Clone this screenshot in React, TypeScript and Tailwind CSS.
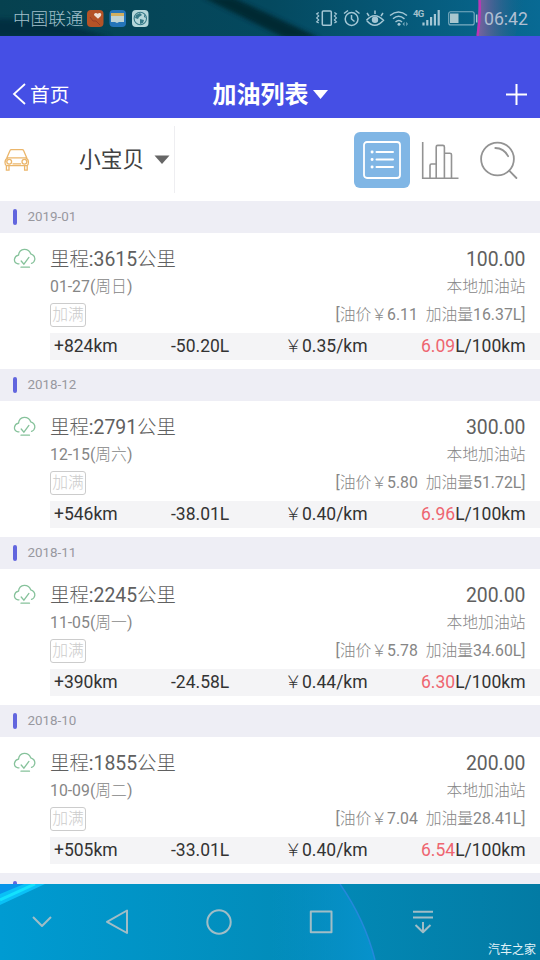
import React from 'react';

type Entry = {
  month: string; odo: string; date: string; day: string; total: string;
  price: string; volume: string; distance: string; used: string; cost: string; rate: string;
};

const entries: Entry[] = [
  { month: '2019-01', odo: '3615', date: '01-27', day: '周日', total: '100.00', price: '6.11', volume: '16.37', distance: '824', used: '50.20', cost: '0.35', rate: '6.09' },
  { month: '2018-12', odo: '2791', date: '12-15', day: '周六', total: '300.00', price: '5.80', volume: '51.72', distance: '546', used: '38.01', cost: '0.40', rate: '6.96' },
  { month: '2018-11', odo: '2245', date: '11-05', day: '周一', total: '200.00', price: '5.78', volume: '34.60', distance: '390', used: '24.58', cost: '0.44', rate: '6.30' },
  { month: '2018-10', odo: '1855', date: '10-09', day: '周二', total: '200.00', price: '7.04', volume: '28.41', distance: '505', used: '33.01', cost: '0.40', rate: '6.54' },
];

function StatusBar() {
  return (
    <div className="relative h-9 shrink-0 overflow-hidden bg-linear-to-r from-[#06414f] via-[#04495f] to-[#086a94]">
      <svg className="absolute inset-0" width="540" height="36" viewBox="0 0 540 36">
        <defs>
          <linearGradient id="glow" x1="0" x2="1"><stop offset="0" stopColor="#8062a0" /><stop offset="1" stopColor="#146386" stopOpacity="0" /></linearGradient>
          <filter id="soft" x="-20%" y="-50%" width="140%" height="200%"><feGaussianBlur stdDeviation="2" /></filter>
        </defs>
        <path d="M-5 19L45 20L112 37H-5Z" fill="#062c3d" opacity=".8" filter="url(#soft)" />
        <path d="M202 -3H232L320 38H285Z" fill="#06252f" opacity=".9" filter="url(#soft)" />
        <path d="M479 0h46l-10 36h-38Z" fill="url(#glow)" />
        <path d="M479.5 0q1 18-2 36" stroke="#bd35b6" strokeWidth="2.4" fill="none" />
      </svg>
      <div className="relative flex h-9 items-center pl-[13px] pr-3 text-[#a3c0cc]">
        <span className="w-[72px] whitespace-nowrap pt-0.5 text-[17.6px] font-light leading-9">中国联通</span>
        <svg className="ml-[2px]" width="62" height="17" viewBox="0 0 62 17">
          <rect width="16.5" height="17" rx="4" fill="#b45327" />
          <path d="M11 8.8L7.4 5.6C6 3.8 8.7 1.7 10.7 3.7C13 2 15.5 4 13.6 6.2Z" fill="#eee2d8" />
          <path d="M3 7l3 4 3 0 4 4" stroke="#963c25" fill="none" />
          <rect x="22.5" width="16.5" height="17" rx="4" fill="#2474b9" />
          <path d="M24 3h13v3H24z" fill="#d1af60" /><path d="M24 6h13v6h-5l-2 1-2-1h-4z" fill="#bfd3d5" />
          <rect x="45" width="16.5" height="17" rx="4" fill="#b6d7da" />
          <circle cx="53.3" cy="8.5" r="6.2" fill="none" stroke="#367987" strokeWidth="1.1" />
          <path d="M49 5l4-2 2 2-3 2-1 2-3-1zM53 9l4 1-1 3-3 1zM57 4l2 4-2-1z" fill="#367987" />
        </svg>
        <svg className="absolute left-[315px] top-[8px]" width="165" height="20" viewBox="0 0 165 20" fill="none" stroke="#a4c7d5" strokeWidth="1.5">
          <rect x="7.3" y="3" width="9" height="14.3" rx="1" />
          <path d="M3.7 4.5l-2 1.4 2 2-2 2 2 2-2 2 2 1M19.4 4.5l2 1.4-2 2 2 2-2 2 2 2-2 1" strokeWidth="1.2" />
          <circle cx="36.6" cy="11" r="6.4" /><path d="M36.5 7v4l3 2.5M29 5.5l4-3M40.5 2.5l4 3" />
          <path d="M51.5 12.2q8-9 17 0q-9 10-17 0M54 8l-2-3M60 6V2.5M66 8l2-3" /><circle cx="60" cy="11.8" r="3.2" fill="#a4c7d5" stroke="none" />
          <path d="M75 7.5q8.5-7 17 0M78 10.8q5.5-5 11.5 0M80.5 14q3.5-3 6.5 0" />
          <circle cx="84" cy="16.2" r="1.5" fill="#a4c7d5" stroke="none" /><path d="M87.5 16l2-2.2v4.4ZM93 16l-1.8-2.2v4.4Z" fill="#a4c7d5" stroke="none" opacity=".7" />
          <path d="M108.5 14.5v3M112.3 12v5.5M116.1 9v8.5M119.9 6v11.5M123.7 2v15.5" strokeWidth="2.2" />
          <rect x="133.7" y="3.7" width="25.5" height="13.2" rx="2" strokeWidth="1.1" opacity=".75" /><rect x="135" y="5.5" width="8.5" height="9.5" fill="#a9c7cf" stroke="none" /><path d="M161.7 6.5v8" />
        </svg>
        <span className="absolute left-[413px] top-[8px] text-[9.5px] font-bold leading-3 tracking-[-0.8px]">4G</span>
        <span className="ml-auto pt-0.5 text-[17.7px] text-[#b0bfd2]">06:42</span>
      </div>
    </div>
  );
}

function Toolbar() {
  return (
    <div className="flex h-[83px] shrink-0 bg-white">
      <div className="my-2 flex w-[175px] items-center border-r border-[#eeeef1] pl-1">
        <svg width="26" height="24" viewBox="0 0 26 24" fill="none" stroke="#ebb66b" strokeWidth="1.3">
          <path d="M2.6 10.5L6 2.6Q6.4 1.6 7.4 1.6H18.2Q19.2 1.6 19.6 2.6L23 10.5M4 9.8H21.6Q24.6 11 24.4 14.5Q24.4 17 23 17.6H2.6Q1 17 1 14.5Q1 11 4 9.8ZM2.4 17.8v4.4H5v-4.4M20.6 17.8v4.4h2.6v-4.4M8.5 15.8h8.6" />
          <circle cx="5.2" cy="13.7" r="2.4" /><circle cx="20.4" cy="13.7" r="2.4" />
        </svg>
        <span className="ml-[49px] whitespace-nowrap pt-0.5 text-[21.7px] text-[#414141]">小宝贝</span>
        <svg className="ml-auto mr-1 mt-px" width="16" height="10" viewBox="0 0 16 10"><path d="M.5 .5h15L8 9Z" fill="#666" /></svg>
      </div>
      <div className="ml-auto flex items-center pr-[21px] pt-px">
        <div className="grid size-14 place-items-center rounded-[6px] bg-[#80b6e5]">
          <svg width="38" height="38" viewBox="0 0 38 38" fill="none" stroke="#fff" strokeWidth="1.8" strokeLinecap="round">
            <rect x="1" y="1" width="36" height="36" rx="3" /><path d="M13.5 11H30M13.5 18.5H30M13.5 26H30" strokeWidth="2" /><path d="M9 11h.2M9 18.5h.2M9 26h.2" strokeWidth="2.8" />
          </svg>
        </div>
        <svg className="ml-[11px]" width="38" height="39" viewBox="0 0 38 39" fill="none" stroke="#939393" strokeWidth="1.6">
          <path d="M1.7 1V37.2H37.5M9 37V24.5q0-1.5 1.5-1.5H15M15.2 37V6q0-1.6 1.5-1.6h5.2q1.5 0 1.5 1.6v31M23.5 12.2h5.4q1.6 0 1.6 1.6V37" />
        </svg>
        <svg className="ml-5" width="40" height="40" viewBox="0 0 40 40" fill="none" stroke="#939393" strokeWidth="1.8" strokeLinecap="round">
          <circle cx="18.5" cy="19" r="16.4" /><path d="M16.3 8q8.5 0 12.8 8.2M30.2 30.7l7.2 7.3" />
        </svg>
      </div>
    </div>
  );
}

function MonthHeader({ month }: { month: string }) {
  return (
    <div className="flex h-8 shrink-0 items-center bg-[#eeeef5] pl-[13px]">
      <span className="h-4 w-1 rounded-sm bg-[#6266de]" />
      <span className="ml-[10.5px] text-[13.4px] text-[#98989f]">{month}</span>
    </div>
  );
}

function EntryCard({ e }: { e: Entry }) {
  return (
    <section className="shrink-0 font-[Roboto,'Noto_Sans_CJK_SC_Light','Noto_Sans_CJK_SC',sans-serif]">
      <MonthHeader month={e.month} />
      <div className="flex h-[136px] bg-white pl-[13px]">
        <svg className="mt-[15px] shrink-0" width="24" height="22" viewBox="0 0 24 22" fill="none" stroke="#86c29b" strokeWidth="1.3" strokeLinecap="round">
          <path d="M6 15.8H5Q1 15 1.5 11.2Q2 8 5.5 7.2Q6.2 1.6 11.2 1.3Q16.2 1.2 17.7 5.8Q22.2 7.2 21.8 11.5Q21.3 14.5 18.5 15.4M8.2 13l2.7 3.2 5-6.8M8 19.2h8.5" />
        </svg>
        <div className="ml-[13px] flex flex-1 flex-col">
          <div className="mt-3 flex h-[29px] items-center justify-between pr-[14.5px] text-[19.4px] text-[#606060]">
            <span>里程:{e.odo}公里</span><span>{e.total}</span>
          </div>
          <div className="flex h-[25px] items-center justify-between pr-[14.5px] text-[15.8px] text-[#868686]">
            <span>{e.date}({e.day})</span><span>本地加油站</span>
          </div>
          <div className="flex h-8 items-center justify-between pr-[14.5px]">
            <span className="flex h-6 w-9 items-center justify-center rounded-[3px] border border-[#ccc] text-[15.8px] font-light leading-none text-[#ccc]">加满</span>
            <span className="whitespace-pre text-[15.8px] text-[#868686]">[油价￥{e.price}  加油量{e.volume}L]</span>
          </div>
          <div className="mt-0.5 flex h-[27px] items-center bg-[#f4f4f6] pl-1 pr-[14.5px] text-[17.5px] text-[#333]">
            <span className="w-[117px]">+{e.distance}km</span>
            <span className="w-[113.5px]">-{e.used}L</span>
            <span>￥{e.cost}/km</span>
            <span className="ml-auto"><span className="text-[#ee6570]">{e.rate}</span>L/100km</span>
          </div>
        </div>
      </div>
    </section>
  );
}

function NavigationBar() {
  return (
    <div className="relative h-[76px] shrink-0 overflow-hidden bg-linear-to-r from-[#009bd2] via-[#028dbb] to-[#037ba4]">
      <svg className="absolute inset-0" width="540" height="76" viewBox="0 0 540 76">
        <defs>
          <linearGradient id="arc" x1="0" x2="1"><stop offset="0" stopColor="#0792cc" stopOpacity="0" /><stop offset="1" stopColor="#0792cc" /></linearGradient>
        </defs>
        <path d="M0 0H45L0 21Z" fill="#0ac0f6" /><path d="M0 0H24L0 10Z" fill="#0794ea" /><path d="M0 16L35 0" stroke="#13e1fd" strokeWidth="3" />
        <path d="M270 0H340Q365 36 375 76H270Z" fill="url(#arc)" />
        <path d="M340 0Q365 36 375 76" stroke="#2588dc" strokeWidth="1.5" fill="none" />
        <g fill="none" stroke="#a1bdc6" strokeWidth="2" strokeLinejoin="round">
          <path d="M33 33l9 9 9-9M127 26.5V49L107 37.8Z" /><circle cx="219" cy="38" r="11.7" />
          <rect x="310.8" y="27.5" width="20.7" height="20.7" /><path d="M413 27.7h20M413 33.5h20M423 38v10M415.5 41l7.5 7.2 7.5-7.2" />
        </g>
      </svg>
      <span className="absolute bottom-[2px] right-[4px] text-[12px] leading-4 text-[#e2f3f8]">汽车之家</span>
    </div>
  );
}

export default function App() {
  return (
    <main className="flex h-[960px] w-[540px] flex-col overflow-hidden bg-white font-[Roboto,'Noto_Sans_CJK_SC',sans-serif]">
      <StatusBar />
      <header className="grid h-[82px] shrink-0 grid-cols-3 items-center bg-[#454fe5] pt-[35px] text-white">
        <div className="flex items-center pl-3 text-[19.7px]">
          <svg className="mr-1" width="14" height="22" viewBox="0 0 14 22" fill="none" stroke="white" strokeWidth="1.8"><path d="M13 1L2 11L13 21" /></svg>
          <span className="pt-0.5">首页</span>
        </div>
        <div className="flex items-center justify-center text-[24px] font-bold">
          <span className="pt-px">加油列表</span><svg className="ml-1" width="15" height="9" viewBox="0 0 15 9"><path d="M0 0h15L7.5 9Z" fill="white" /></svg>
        </div>
        <svg className="mr-[13px] justify-self-end" width="21" height="21" viewBox="0 0 21 21" stroke="white" strokeWidth="2"><path d="M10.5 0v21M0 10.5h21" /></svg>
      </header>
      <Toolbar />
      <div className="min-h-0 flex-1 overflow-hidden">
        {entries.map((e) => <EntryCard key={e.month} e={e} />)}
        <MonthHeader month="2018-09" />
      </div>
      <NavigationBar />
    </main>
  );
}
